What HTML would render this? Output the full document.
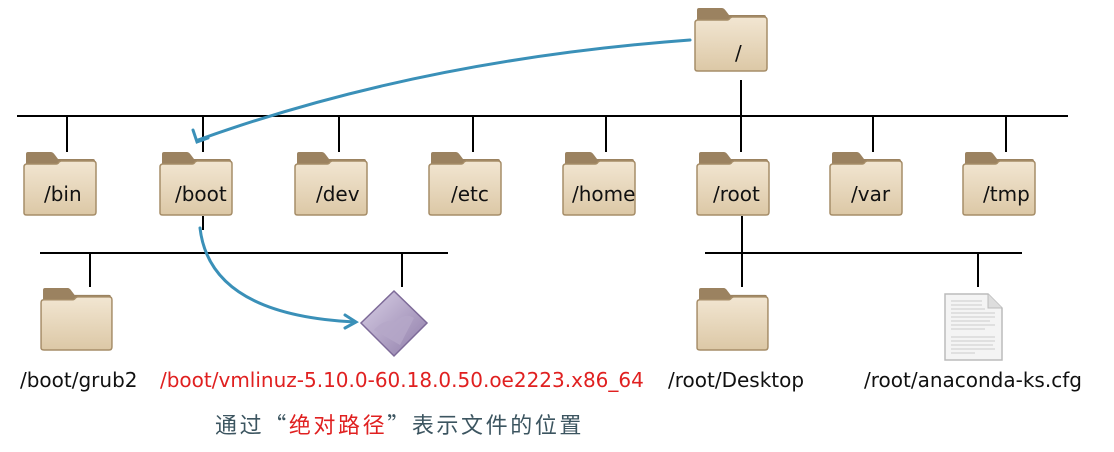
<!DOCTYPE html>
<html><head><meta charset="utf-8"><style>
body{margin:0;width:1114px;height:452px;background:#fff;overflow:hidden;position:relative;font-family:"DejaVu Sans","Noto Sans CJK SC",sans-serif}
.t{position:absolute;font-size:20px;color:#111;white-space:nowrap}
</style></head><body>
<svg width="1114" height="452" style="position:absolute;left:0;top:0">
<defs>
<linearGradient id="fb" x1="0" y1="0" x2="0" y2="1"><stop offset="0" stop-color="#f2e6d2"/><stop offset="1" stop-color="#dcc8a6"/></linearGradient>
<linearGradient id="dm" x1="0" y1="0" x2="1" y2="1"><stop offset="0" stop-color="#d9d0e6"/><stop offset="1" stop-color="#8e7ba8"/></linearGradient>
<symbol id="f" viewBox="0 0 74 65">
<path d="M3 3 Q3 1 5 1 H28 Q30 1 32 4 L35 8 H70 Q72 8 72 10 V20 H3Z" fill="#9b8260"/>
<path d="M1 62 V16 Q1 13 4 13 H33 Q35 13 36 11 L38 10 H70 Q73 10 73 13 V61 Q73 64 70 64 H4 Q1 64 1 62Z" fill="url(#fb)" stroke="#a68d68" stroke-width="1.5"/>
</symbol>
</defs>
<g stroke="#000" stroke-width="2" fill="none">
<path d="M741 80V116M17 116H1068M67 116V152M203 116V152M339 116V152M473 116V152M606 116V152M741 116V152M873 116V152M1006 116V152"/>
<path d="M40 253H448M90 253V287M402 253V287M705 253H1022M742 216V287M978 253V287M203 216V230"/>
</g>
<use href="#f" x="694" y="7" width="74" height="65"/>
<use href="#f" x="23" y="151" width="74" height="65"/>
<use href="#f" x="159" y="151" width="74" height="65"/>
<use href="#f" x="294" y="151" width="74" height="65"/>
<use href="#f" x="428" y="151" width="74" height="65"/>
<use href="#f" x="562" y="151" width="74" height="65"/>
<use href="#f" x="696" y="151" width="74" height="65"/>
<use href="#f" x="829" y="151" width="74" height="65"/>
<use href="#f" x="962" y="151" width="74" height="65"/>
<use href="#f" x="40" y="287" width="73" height="64"/>
<use href="#f" x="696" y="287" width="73" height="64"/>
<path d="M394 291 L427 323 L394 356 L361 323Z" fill="url(#dm)" stroke="#7d6a98" stroke-width="1.5"/>
<path d="M374 330 Q385 318 395 322 Q405 312 414 318 L400 345 Z" fill="#b5a8c8" opacity=".8"/>
<path d="M945 294 H988 L1002 308 V360 H945Z" fill="#f4f4f4" stroke="#bbb" stroke-width="1.5"/>
<path d="M988 294 V308 H1002" fill="#ddd" stroke="#bbb"/>
<g stroke="#ccc" stroke-width="1"><path d="M951 301H982M951 305H982M951 309H985M951 313H995M951 317H995M951 321H990M951 325H995M951 329H985M951 337H995M951 341H995M951 345H993M951 349H995M951 353H975"/></g>
<g stroke="#3a90b8" stroke-width="3" fill="none" stroke-linecap="round">
<path d="M690 40 Q420 60 198 140"/><path d="M193 130 L197 142 L208 138"/>
<path d="M200 228 Q210 315 355 322"/><path d="M345 315 L356 322 L345 328"/>
</g>
</svg>
<div class="t" style="left:735px;top:41px">/</div>
<div class="t" style="left:44px;top:182px">/bin</div>
<div class="t" style="left:175px;top:182px">/boot</div>
<div class="t" style="left:316px;top:182px">/dev</div>
<div class="t" style="left:451px;top:182px">/etc</div>
<div class="t" style="left:572px;top:182px">/home</div>
<div class="t" style="left:713px;top:182px">/root</div>
<div class="t" style="left:851px;top:182px">/var</div>
<div class="t" style="left:983px;top:182px">/tmp</div>
<div class="t" style="left:20px;top:368px">/boot/grub2</div>
<div class="t" style="left:160px;top:368px;color:#e02020">/boot/vmlinuz-5.10.0-60.18.0.50.oe2223.x86_64</div>
<div class="t" style="left:668px;top:368px">/root/Desktop</div>
<div class="t" style="left:864px;top:368px">/root/anaconda-ks.cfg</div>
<div class="t" style="left:215px;top:408px;font-size:22px;letter-spacing:2.6px;color:#3c5560;font-family:'Noto Sans CJK SC',sans-serif">通过“<span style="color:#e02020">绝对路径</span>”表示文件的位置</div>
</body></html>
